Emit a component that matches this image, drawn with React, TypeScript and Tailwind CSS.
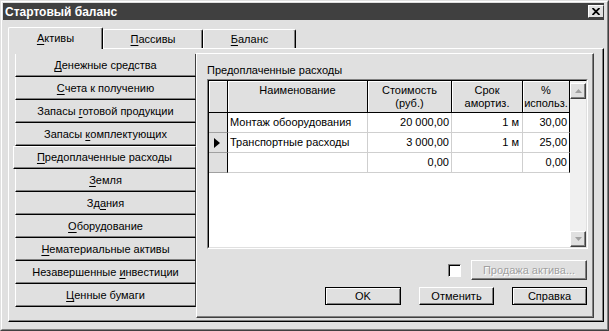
import React from "react";

type Acc = [string, string, string];

const sideItems: Acc[] = [
  ["", "Д", "енежные средства"],
  ["", "С", "чета к получению"],
  ["Запасы ", "г", "отовой продукции"],
  ["Запасы ", "к", "омплектующих"],
  ["", "П", "редоплаченные расходы"],
  ["", "З", "емля"],
  ["Зд", "а", "ния"],
  ["", "О", "борудование"],
  ["", "Н", "ематериальные активы"],
  ["Незавершенные ", "и", "нвестиции"],
  ["", "Ц", "енные бумаги"],
];

const rows = [
  { name: "Монтаж обоорудования", cost: "20 000,00", term: "1 м", pct: "30,00", current: false },
  { name: "Транспортные расходы", cost: "3 000,00", term: "1 м", pct: "25,00", current: true },
  { name: "", cost: "0,00", term: "", pct: "0,00", current: false },
];

const Label = ({ a }: { a: Acc }) => (
  <span>
    {a[0]}
    <span className="underline underline-offset-2">{a[1]}</span>
    {a[2]}
  </span>
);

const ScrollBtn = ({ down }: { down?: boolean }) => (
  <div className="h-[16px] w-full bg-[#e0e0e0] border-t border-l border-t-white border-l-white border-r border-b border-r-[#404040] border-b-[#404040] shadow-[inset_-1px_-1px_0_#808080] flex items-center justify-center">
    <svg width="7" height="4" viewBox="0 0 7 4">
      <path d={down ? "M0 0 H7 L3.5 4 Z" : "M0 4 H7 L3.5 0 Z"} fill="#a0a0a0" />
    </svg>
  </div>
);

export default function App() {
  return (
    <div className="w-[609px] h-[331px] bg-[#e0e0e0] border border-t-[#e0e0e0] border-l-[#e0e0e0] border-r-[#404040] border-b-[#404040] font-['Liberation_Sans',Arial,sans-serif] text-[11px] text-black overflow-hidden">
      <div className="h-full border border-t-white border-l-white border-r-[#808080] border-b-[#808080] p-px pr-[3px] flex flex-col">
        {/* title bar */}
        <div className="h-[17px] bg-[#404040] flex items-center justify-between pl-[2px]">
          <span className="text-white font-bold text-[12px] leading-none">Стартовый баланс</span>
          <div className="w-[16px] h-[13px] bg-[#e0e0e0] border border-t-white border-l-white border-r-[#404040] border-b-[#404040] flex items-center justify-center">
            <svg width="8" height="7" viewBox="0 0 8 7">
              <path d="M0.5 0 L7.5 7 M7.5 0 L0.5 7" stroke="#000" strokeWidth="1.8" />
            </svg>
          </div>
        </div>

        <div className="mt-[7px] pl-[5px]">
          {/* tabs */}
          <div className="flex items-end h-[21px]">
            <div className="relative z-10 -mb-px w-[95px] h-[22px] bg-[#e0e0e0] border-t border-l border-t-white border-l-white border-r border-r-black shadow-[inset_-1px_0_0_#808080] rounded-t-[2px] flex items-center justify-center">
              <Label a={["", "А", "ктивы"]} />
            </div>
            <div className="w-[100px] h-[19px] border-t border-l border-t-white border-l-white border-r border-r-black shadow-[inset_-1px_0_0_#808080] rounded-t-[2px] flex items-center justify-center">
              <Label a={["", "П", "ассивы"]} />
            </div>
            <div className="w-[93px] h-[19px] border-t border-l border-t-white border-l-white border-r border-r-black shadow-[inset_-1px_0_0_#808080] rounded-t-[2px] flex items-center justify-center">
              <Label a={["", "Б", "аланс"]} />
            </div>
          </div>

          {/* tab page */}
          <div className="h-[274px] border border-t-white border-l-white border-r-black border-b-black shadow-[inset_-1px_-1px_0_#808080] pl-[6px] pt-[4px] flex">
            <div className="w-[181px] pt-px flex flex-col">
              {sideItems.map((a, i) => {
                const sel = i === 4;
                return (
                  <div
                    key={i}
                    className={
                      "h-[23px] flex items-center justify-center border-l border-l-white border-r border-r-[#404040] border-b border-b-black shadow-[inset_0_-1px_0_#808080] " +
                      (sel ? "-ml-[2px] border-t border-t-white" : "")
                    }
                  >
                    <Label a={a} />
                  </div>
                );
              })}
            </div>

            {/* right page */}
            <div className="w-[398px] h-[265px] border border-t-white border-l-white border-r-[#404040] border-b-[#404040] shadow-[inset_-1px_-1px_0_#808080] pt-[10px] pl-[10px] pr-[5px] flex flex-col">
              <div className="leading-[13px]">Предоплаченные расходы</div>
              <div className="mt-[2px] w-[381px] h-[170px] border border-t-[#808080] border-l-[#808080] border-r-white border-b-white">
                <div className="h-full border border-t-black border-l-black border-r-[#e0e0e0] border-b-[#e0e0e0] flex bg-white">
                  <div className="flex-1 flex flex-col">
                    <div className="flex h-[32px] bg-[#e0e0e0] leading-[13px] text-center">
                      <div className="w-[19px] border-r border-b border-black shadow-[inset_1px_1px_0_#fff]" />
                      <div className="w-[140px] border-r border-b border-black pt-[3px] shadow-[inset_1px_1px_0_#fff]">Наименование</div>
                      <div className="w-[84px] border-r border-b border-black pt-[3px] shadow-[inset_1px_1px_0_#fff]">Стоимость<br />(руб.)</div>
                      <div className="w-[71px] border-r border-b border-black pt-[3px] shadow-[inset_1px_1px_0_#fff]">Срок<br />амортиз.</div>
                      <div className="w-[47px] border-r border-b border-black pt-[3px] shadow-[inset_1px_1px_0_#fff]">%<br />использ.</div>
                    </div>
                    {rows.map((r, i) => (
                      <div key={i} className="flex h-[20px] leading-[19px]">
                        <div className="w-[19px] bg-[#e0e0e0] border-r border-r-black border-b border-b-[#a0a0a0] flex items-center pl-[5px]">
                          {r.current && (
                            <svg width="6" height="10" viewBox="0 0 6 10">
                              <path d="M0 0 L6 5 L0 10 Z" fill="#000" />
                            </svg>
                          )}
                        </div>
                        <div className="w-[140px] border-r border-b border-[#cfcfcf] pl-[2px]">{r.name}</div>
                        <div className="w-[84px] border-r border-b border-[#cfcfcf] text-right pr-[2px]">{r.cost}</div>
                        <div className="w-[71px] border-r border-b border-[#cfcfcf] text-right pr-[3px]">{r.term}</div>
                        <div className="w-[47px] border-r border-r-black border-b border-b-[#cfcfcf] text-right pr-[2px]">{r.pct}</div>
                      </div>
                    ))}
                    <div className="flex-1 bg-white" />
                  </div>
                  <div className="w-[16px] bg-[#f0f0f0] flex flex-col justify-between pt-[2px]">
                    <ScrollBtn />
                    <ScrollBtn down />
                  </div>
                </div>
              </div>

              <div className="mt-[11px] flex items-center justify-end pr-px">
                <div className="w-[13px] h-[13px] border border-t-[#808080] border-l-[#808080] border-r-white border-b-white">
                  <div className="h-full bg-white border-t border-l border-black" />
                </div>
                <div className="ml-[10px] w-[116px] h-[20px] border border-t-white border-l-white border-r-[#404040] border-b-[#404040] shadow-[inset_-1px_-1px_0_#808080] flex items-center justify-center text-[#a0a0a0] [text-shadow:1px_1px_0_#fff]">
                  Продажа актива...
                </div>
              </div>

              <div className="mt-[7px] flex justify-end gap-[18px] pr-px">
                <div className="w-[76px] h-[18px] border border-black shadow-[inset_1px_1px_0_#fff,inset_-1px_-1px_0_#808080] flex items-center justify-center">OK</div>
                <div className="w-[75px] h-[18px] border border-t-white border-l-white border-r-black border-b-black shadow-[inset_-1px_-1px_0_#808080] flex items-center justify-center">Отменить</div>
                <div className="w-[75px] h-[18px] border border-black shadow-[inset_1px_1px_0_#fff,inset_-1px_-1px_0_#808080] flex items-center justify-center">Справка</div>
              </div>
            </div>
          </div>
        </div>
      </div>
    </div>
  );
}
